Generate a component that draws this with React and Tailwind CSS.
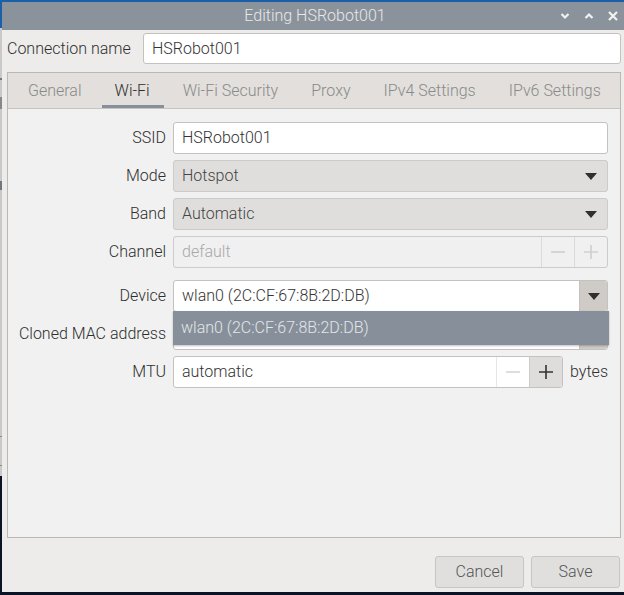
import React from 'react'

function Arrow() {
  return (
    <svg width="12" height="7" viewBox="0 0 12 7">
      <path d="M0 0 L12 0 L6 7 Z" fill="#2f2f2f" />
    </svg>
  )
}

function Minus({ color }) {
  return (
    <svg width="16" height="16" viewBox="0 0 16 16">
      <path d="M1 8 H15" stroke={color} strokeWidth="1.6" />
    </svg>
  )
}

function PlusIcon({ color }) {
  return (
    <svg width="16" height="16" viewBox="0 0 16 16">
      <path d="M1 8 H15 M8 1 V15" stroke={color} strokeWidth="1.6" />
    </svg>
  )
}

function Row({ label, children, className = '' }) {
  return (
    <div className={`flex items-center h-[32px] ${className}`}>
      <div className="w-[158px] text-right text-[#2e2e2e] whitespace-nowrap">{label}</div>
      <div className="ml-[7px] flex-1 h-full flex">{children}</div>
    </div>
  )
}

const tabs = ['General', 'Wi-Fi', 'Wi-Fi Security', 'Proxy', 'IPv4 Settings', 'IPv6 Settings']

export default function App() {
  return (
    <div className="w-[624px] h-[595px] overflow-hidden flex bg-[#0f1f3a] font-[Roboto,sans-serif] font-light text-[16px]">
      {/* desktop strip at the left */}
      <div className="w-[2px] flex flex-col">
        <div className="h-[28px] bg-[#1b5fa8]" />
        <div className="h-[50px] bg-[#c9c9c9]" />
        <div className="h-[2px] bg-[#777]" />
        <div className="h-[17px] bg-[#c9c9c9]" />
        <div className="h-[12px] bg-[#888]" />
        <div className="h-[72px] bg-[#c9c9c9]" />
        <div className="h-[9px] bg-[#6f7780]" />
        <div className="h-[246px] bg-[#c9c9c9]" />
        <div className="h-[1px] bg-[#888]" />
        <div className="h-[28px] bg-[#c9c9c9]" />
        <div className="h-[1px] bg-[#888]" />
        <div className="h-[10px] bg-[#c9c9c9]" />
        <div className="flex-1 bg-[#0b1426]" />
      </div>

      <div className="flex-1 flex flex-col">
        <div className="h-[2px] bg-[#1b5fa8]" />
        {/* title bar */}
        <div className="h-[28px] bg-[#8a939c] flex items-center relative">
          <div className="flex-1 text-center text-[#e8e8e8] pl-[4px]">Editing HSRobot001</div>
          <div className="absolute right-[6px] top-0 h-full flex items-center gap-[14px]">
            <svg width="10" height="8" viewBox="0 0 10 8">
              <path d="M1.5 2 L5 5.5 L8.5 2" stroke="#f2f2f2" strokeWidth="2.2" fill="none" />
            </svg>
            <svg width="10" height="8" viewBox="0 0 10 8">
              <path d="M1.5 6 L5 2.5 L8.5 6" stroke="#f2f2f2" strokeWidth="2.2" fill="none" />
            </svg>
            <svg width="10" height="10" viewBox="0 0 10 10">
              <path d="M1 1 L9 9 M9 1 L1 9" stroke="#f2f2f2" strokeWidth="2.2" fill="none" />
            </svg>
          </div>
        </div>

        <div className="flex-1 flex flex-col bg-[#edecea]">
          {/* Connection name */}
          <div className="mt-[3px] h-[31px] flex items-center">
            <div className="pl-[5px] w-[141px] text-[#2e2e2e]">Connection name</div>
            <div className="flex-1 mr-[3px] h-full bg-white border border-[#c4c2bf] rounded-[3px] flex items-center px-[8px] text-[#333]">
              HSRobot001
            </div>
          </div>

          {/* Notebook */}
          <div className="mt-[8px] ml-[5px] mr-[3px] flex-1 border border-[#bab8b5] flex flex-col bg-[#f1f1f1]">
            <div className="h-[36px] bg-[#e2dfdc] border-b border-[#c6c4c1] flex pl-[4px]">
              {tabs.map((t) => (
                <div key={t} className="px-[3px] h-full flex">
                  <div
                    className={`pl-[13px] pr-[14px] h-full flex items-center border-b-[3px] ${
                      t === 'Wi-Fi' ? 'border-[#87909a] text-[#2e2e2e]' : 'border-transparent text-[#8a8a8a]'
                    }`}
                  >
                    <span className="mt-[3px]">{t}</span>
                  </div>
                </div>
              ))}
            </div>

            <div className="pt-[13px] pr-[12px] flex flex-col">
              <Row label="SSID">
                <div className="flex-1 bg-white border border-[#c4c2bf] rounded-[3px] flex items-center px-[8px] text-[#333]">
                  HSRobot001
                </div>
              </Row>

              <Row label="Mode" className="mt-[6px]">
                <div className="flex-1 bg-[#dfdedc] border border-[#cdcbc8] rounded-[3px] flex items-center justify-between pl-[8px] pr-[10px] text-[#444]">
                  <span>Hotspot</span>
                  <Arrow />
                </div>
              </Row>

              <Row label="Band" className="mt-[6px]">
                <div className="flex-1 bg-[#dfdedc] border border-[#cdcbc8] rounded-[3px] flex items-center justify-between pl-[8px] pr-[10px] text-[#444]">
                  <span>Automatic</span>
                  <Arrow />
                </div>
              </Row>

              <Row label="Channel" className="mt-[6px]">
                <div className="flex-1 bg-[#f0f0f0] border border-[#cbcbcb] rounded-[3px] flex">
                  <div className="flex-1 flex items-center px-[8px] text-[#a8a8a8]">default</div>
                  <div className="w-[33px] border-l border-[#dadada] flex items-center justify-center">
                    <Minus color="#cfcfcf" />
                  </div>
                  <div className="w-[33px] border-l border-[#dadada] flex items-center justify-center">
                    <PlusIcon color="#cfcfcf" />
                  </div>
                </div>
              </Row>

              <Row label="Device" className="mt-[12px]">
                <div className="flex-1 relative flex border border-[#c4c2bf] rounded-[3px]">
                  <div className="flex-1 bg-white flex items-center px-[8px] text-[#333] rounded-l-[3px]">
                    wlan0 (2C:CF:67:8B:2D:DB)
                  </div>
                  <div className="w-[28px] bg-[#cfcbc7] border-l border-[#c4c2bf] flex items-center justify-center rounded-r-[3px]">
                    <Arrow />
                  </div>
                  {/* open popup */}
                  <div className="absolute left-[-1px] right-[-2px] top-[30px] h-[34px] bg-[#87909a] flex items-center px-[8px] text-[#e3e6ea] shadow-[0_1px_2px_rgba(0,0,0,0.25)] z-10">
                    wlan0 (2C:CF:67:8B:2D:DB)
                  </div>
                </div>
              </Row>

              <Row label="Cloned MAC address" className="mt-[6px]">
                <div className="flex-1 flex border border-[#c4c2bf] rounded-[3px]">
                  <div className="flex-1 bg-white rounded-l-[3px]" />
                  <div className="w-[28px] bg-[#cfcbc7] border-l border-[#c4c2bf] rounded-r-[3px]" />
                </div>
              </Row>

              <Row label="MTU" className="mt-[6px]">
                <div className="flex-1 flex items-center">
                  <div className="flex-1 h-full flex border border-[#c4c2bf] rounded-[3px] bg-white">
                    <div className="flex-1 flex items-center px-[8px] text-[#333]">automatic</div>
                    <div className="w-[33px] border-l border-[#e6e6e6] flex items-center justify-center">
                      <Minus color="#d6d6d6" />
                    </div>
                    <div className="w-[33px] bg-[#dedddb] border-l border-[#cdcbc8] flex items-center justify-center rounded-r-[3px]">
                      <PlusIcon color="#333" />
                    </div>
                  </div>
                  <span className="ml-[7px] text-[#2e2e2e]">bytes</span>
                </div>
              </Row>
            </div>
          </div>

          {/* buttons */}
          <div className="pt-[18px] pb-[4px] pr-[4px] flex justify-end gap-[7px]">
            <button className="w-[89px] h-[32px] bg-[#e0dfdd] border border-[#c8c6c3] rounded-[3px] text-[#555]">
              Cancel
            </button>
            <button className="w-[89px] h-[32px] bg-[#e0dfdd] border border-[#c8c6c3] rounded-[3px] text-[#555]">
              Save
            </button>
          </div>
        </div>
        <div className="h-[3px] bg-[#0b1426]" />
      </div>
    </div>
  )
}
